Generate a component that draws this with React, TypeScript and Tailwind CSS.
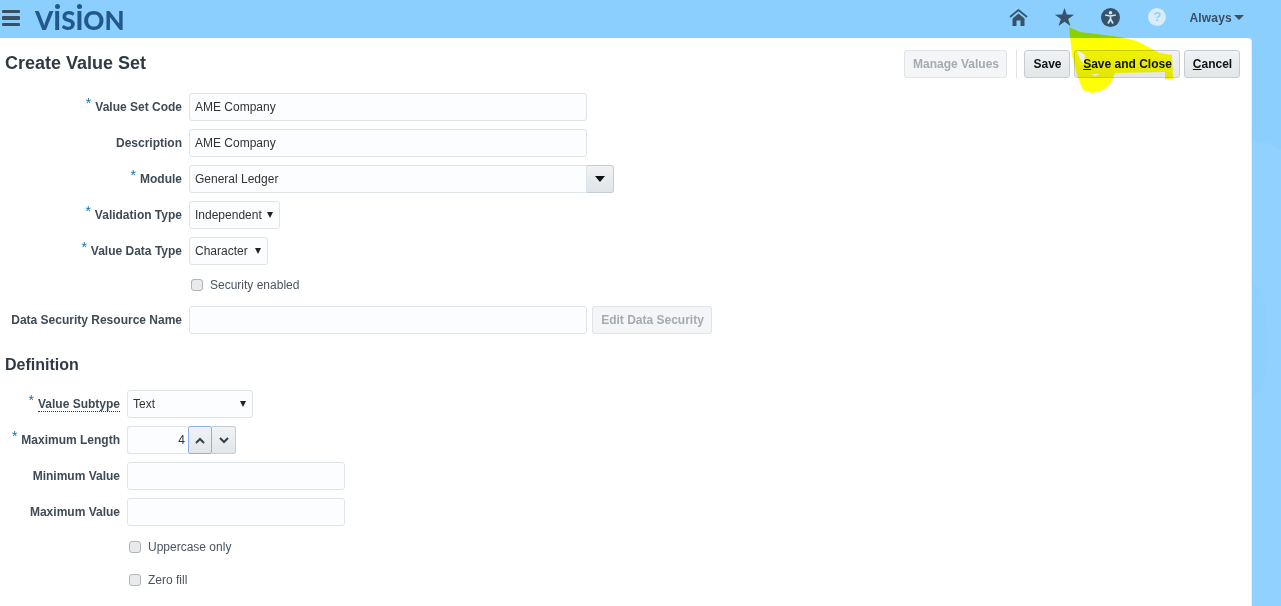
import React from "react";

function Label({ text, req, dotted }: { text: string; req?: boolean; dotted?: boolean }) {
  return (
    <span className="flex items-baseline justify-end text-[12px] font-bold text-[#3e4b57]">
      {req && <span className="text-[#0f72b5] mr-[4px] text-[14px] leading-none relative top-[-3px] font-normal">*</span>}
      <span className={dotted ? "border-b border-dotted border-[#333] leading-[14px]" : ""}>{text}</span>
    </span>
  );
}

function Row({ label, req, dotted, col, children }: { label?: string; req?: boolean; dotted?: boolean; col: string; children: React.ReactNode }) {
  return (
    <div className="flex items-center h-[28px] mb-[8px]">
      <div className={col}>{label && <Label text={label} req={req} dotted={dotted} />}</div>
      <div className="flex items-center ml-[7px]">{children}</div>
    </div>
  );
}

function Input({ w, value }: { w: string; value?: string }) {
  return (
    <div className={`${w} h-[28px] border border-[#dfe4e9] rounded-[3px] bg-[#fcfdfe] px-[5px] flex items-center text-[12px] text-[#333]`}>{value}</div>
  );
}

function Arrow() {
  return <span className="w-0 h-0 border-x-[3.5px] border-x-transparent border-t-[6px] border-t-[#222]"></span>;
}

function Select({ w, value, gap }: { w: string; value: string; gap: string }) {
  return (
    <div className={`${w} h-[28px] border border-[#dfe4e9] rounded-[3px] bg-[#fcfdfe] px-[5px] flex items-center text-[12px] text-[#333] ${gap}`}>
      <span>{value}</span>
      <Arrow />
    </div>
  );
}

function Check({ label }: { label: string }) {
  return (
    <div className="flex items-center h-[13px] text-[12px] text-[#4a5561]">
      <span className="w-[12px] h-[12px] rounded-[3px] border border-[#b0b5ba] bg-[#e8eaec] ml-[2px] mr-[7px]"></span>
      {label}
    </div>
  );
}

function Btn({ children, w, disabled }: { children: React.ReactNode; w: string; disabled?: boolean }) {
  return (
    <div
      className={`${w} h-[28px] pl-[1px] rounded-[3px] border flex items-center justify-center text-[12px] font-bold ${
        disabled
          ? "border-[#e0e4e8] bg-[#f3f5f7] text-[#a5abb1]"
          : "border-[#c4ccd4] bg-gradient-to-b from-[#f0f2f4] to-[#e3e7ea] text-[#111]"
      }`}
    >
      {children}
    </div>
  );
}

export default function App() {
  return (
    <div className="relative w-[1281px] h-[606px] overflow-hidden bg-[#8bcfff] font-['Liberation_Sans',Arial,sans-serif]">
      <svg className="absolute left-[1252px] top-[130px]" width="29" height="476" viewBox="0 0 29 476">
        <path d="M0 10 Q18 12 29 20 L29 476 L0 476 Z" fill="#90d1ff" />
        <path d="M0 150 Q18 165 16 230 Q12 260 0 270 Z" fill="#8dd0ff" />
      </svg>

      <header className="relative h-[38px] flex items-center">
        <div className="w-[18px] ml-[2px] flex flex-col gap-[3px] mt-[-2px]">
          <span className="h-[3.5px] rounded-[1px] bg-[#3a4f5f]"></span>
          <span className="h-[3.5px] rounded-[1px] bg-[#3a4f5f]"></span>
          <span className="h-[3.5px] rounded-[1px] bg-[#3a4f5f]"></span>
        </div>
        <div className="relative ml-[15px] mt-[1px] text-[26px] leading-none font-black text-[#22598a] font-['Lato',sans-serif]">
          VISION
          <span className="absolute left-[20px] top-[-3px] w-[5px] h-[5px] rounded-full bg-[#22598a]"></span>
          <span className="absolute left-[42px] top-[-3px] w-[5px] h-[5px] rounded-full bg-[#22598a]"></span>
        </div>
        <div className="ml-auto flex items-center mt-[-4px]">
          <svg width="19" height="17" viewBox="0 0 19 17">
            <path d="M1 8 L9.5 1 L18 8" fill="none" stroke="#37536b" strokeWidth="1.8" />
            <path d="M3.5 9.5 L9.5 4.5 L15.5 9.5 V17 H11.5 V11.5 H7.5 V17 H3.5 Z" fill="#37536b" />
          </svg>
          <svg className="ml-[27px]" width="19" height="18" viewBox="0 0 19 18">
            <polygon points="9.5,0 11.8,6.6 19,6.8 13.2,11 15.4,18 9.5,13.8 3.6,18 5.8,11 0,6.8 7.2,6.6" fill="#37536b" />
          </svg>
          <svg className="ml-[27px]" width="19" height="19" viewBox="0 0 19 19">
            <circle cx="9.5" cy="9.5" r="9.5" fill="#37536b" />
            <circle cx="9.5" cy="4.8" r="1.8" fill="#cfe6f7" />
            <path d="M4.2 7 L9.5 8 L14.8 7 M9.5 8 V11 M9.5 11 L7 15.5 M9.5 11 L12 15.5" fill="none" stroke="#cfe6f7" strokeWidth="1.7" />
          </svg>
          <div className="ml-[28px] w-[18px] h-[18px] rounded-full bg-[#d9ecfb] flex items-center justify-center text-[13px] font-bold text-[#93cdf6]">?</div>
          <span className="ml-[23px] mt-[2px] text-[12px] font-bold text-[#3c4f60] tracking-[0.2px]">Always</span>
          <span className="ml-[2px] mr-[37px] w-0 h-0 border-x-[5px] border-x-transparent border-t-[5px] border-t-[#3c4f60]"></span>
        </div>
      </header>

      <main className="w-[1252px] h-[568px] bg-white rounded-tr-[4px] border-r border-[#e3eef7]">
        <div className="flex items-center h-[50px]">
          <h1 className="ml-[5px] text-[18px] font-bold text-[#2f3a45]">Create Value Set</h1>
          <div className="ml-auto flex items-center mr-[11px] mt-[2px]">
            <Btn w="w-[103px]" disabled>Manage Values</Btn>
            <span className="w-px h-[28px] bg-[#dfe4e9] ml-[9px] mr-[7px]"></span>
            <Btn w="w-[46px]">Save</Btn>
            <span className="w-[4px]"></span>
            <Btn w="w-[106px]"><span><span className="underline">S</span>ave and Close</span></Btn>
            <span className="w-[4px]"></span>
            <Btn w="w-[56px]"><span><span className="underline">C</span>ancel</span></Btn>
          </div>
        </div>

        <div className="mt-[5px]">
          <Row label="Value Set Code" req col="w-[182px]"><Input w="w-[398px]" value="AME Company" /></Row>
          <Row label="Description" col="w-[182px]"><Input w="w-[398px]" value="AME Company" /></Row>
          <Row label="Module" req col="w-[182px]">
            <div className="w-[398px] h-[28px] border border-[#dfe4e9] rounded-l-[3px] bg-[#fcfdfe] px-[5px] flex items-center text-[12px] text-[#333]">General Ledger</div>
            <div className="w-[27px] h-[28px] border border-l-0 border-[#c4ccd4] rounded-r-[3px] bg-gradient-to-b from-[#f0f2f4] to-[#e1e5e8] flex items-center justify-center">
              <span className="w-0 h-0 border-x-[5px] border-x-transparent border-t-[6px] border-t-[#111]"></span>
            </div>
          </Row>
          <Row label="Validation Type" req col="w-[182px]"><Select w="w-[91px]" value="Independent" gap="gap-[5px]" /></Row>
          <Row label="Value Data Type" req col="w-[182px]"><Select w="w-[79px]" value="Character" gap="gap-[7px]" /></Row>
          <div className="flex items-center h-[13px] mt-[13px] mb-[15px] ml-[189px]"><Check label="Security enabled" /></div>
          <Row label="Data Security Resource Name" col="w-[182px]">
            <Input w="w-[398px]" />
            <div className="ml-[5px]"><Btn w="w-[120px]" disabled>Edit Data Security</Btn></div>
          </Row>
        </div>

        <h2 className="ml-[5px] mt-[21px] h-[20px] leading-[20px] text-[16px] font-bold text-[#2f3a45]">Definition</h2>

        <div className="mt-[15px]">
          <Row label="Value Subtype" req dotted col="w-[120px]">
            <div className="w-[126px] h-[28px] border border-[#dfe4e9] rounded-[3px] bg-[#fcfdfe] px-[5px] flex items-center justify-between text-[12px] text-[#333]">
              <span>Text</span>
              <span className="mr-[1px] flex"><Arrow /></span>
            </div>
          </Row>
          <Row label="Maximum Length" req col="w-[120px]">
            <div className="w-[61px] h-[28px] border border-[#dfe4e9] border-r-0 rounded-l-[3px] bg-[#fcfdfe] px-[3px] flex items-center justify-end text-[12px] text-[#333]">4</div>
            <div className="w-[24px] h-[28px] border border-[#8ab0e6] rounded-[2px] bg-gradient-to-b from-[#f0f2f4] to-[#e3e7ea] flex items-center justify-center">
              <svg width="10" height="7" viewBox="0 0 10 7"><path d="M1 6 L5 2 L9 6" fill="none" stroke="#333f4a" strokeWidth="2" /></svg>
            </div>
            <div className="w-[24px] h-[28px] border border-l-0 border-[#c4ccd4] rounded-r-[3px] bg-gradient-to-b from-[#f0f2f4] to-[#e3e7ea] flex items-center justify-center">
              <svg width="10" height="7" viewBox="0 0 10 7"><path d="M1 1 L5 5 L9 1" fill="none" stroke="#333f4a" strokeWidth="2" /></svg>
            </div>
          </Row>
          <Row label="Minimum Value" col="w-[120px]"><Input w="w-[218px]" /></Row>
          <Row label="Maximum Value" col="w-[120px]"><Input w="w-[218px]" /></Row>
          <div className="flex items-center h-[13px] mt-[14px] ml-[127px]"><Check label="Uppercase only" /></div>
          <div className="flex items-center h-[13px] mt-[20px] ml-[127px]"><Check label="Zero fill" /></div>
        </div>
      </main>

      <svg className="absolute left-[1065px] top-[26px] pointer-events-none mix-blend-multiply" width="112" height="70" viewBox="0 0 112 70">
        <path
          fillRule="evenodd"
          d="M4 1 L15 6 L55 11 L72 15 L87 23 L95 27 L107 29 L108 53 L100 53 L100 46 L50 47 L45 58 L38 64 L27 67 L18 64 L12 49 L7 29 Z M12 24 L20 29 L19 39 L15 33 Z M26 48 L35 48 L30 50 Z"
          fill="#ffff00"
        />
      </svg>
    </div>
  );
}
